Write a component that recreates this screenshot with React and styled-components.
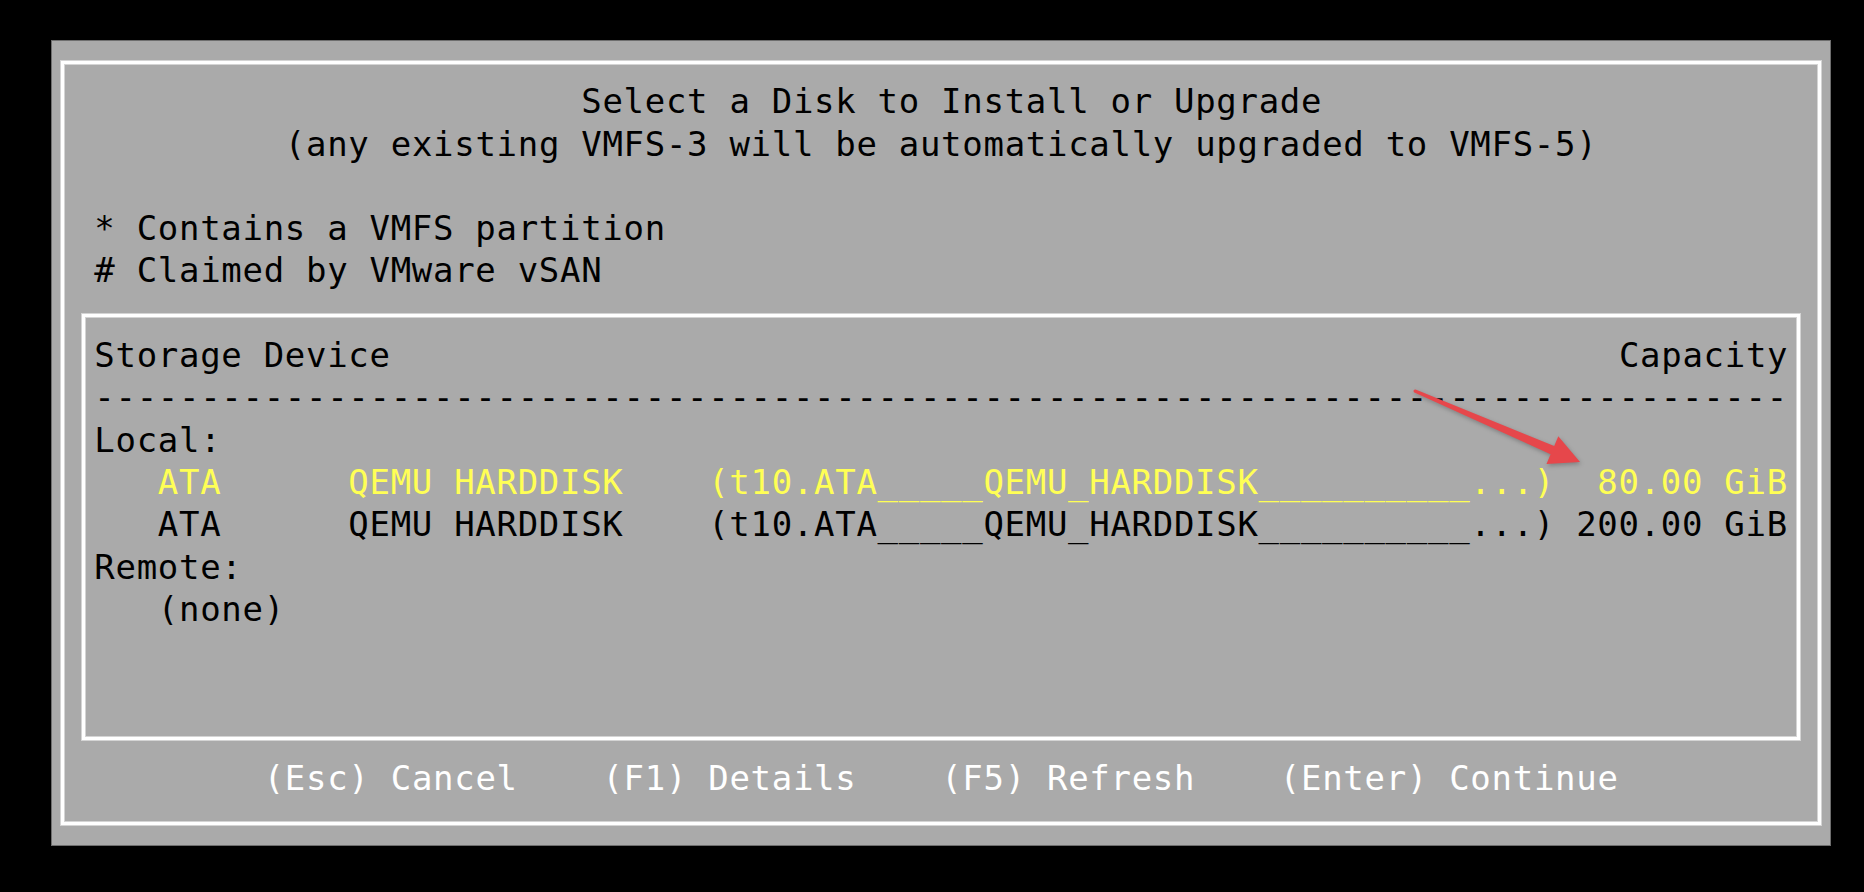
import React from 'react';
import styled, { createGlobalStyle } from 'styled-components';

// one text cell of the console: 84 x 19 cells on the grey panel
const CW = 21.17;
const RH = 42.3;
const cols = n => `${(n * CW).toFixed(2)}px`;

const GlobalStyle = createGlobalStyle`
  html, body {
    margin: 0;
    padding: 0;
    background: #000;
  }
  body {
    font-family: "DejaVu Sans Mono", "Liberation Mono", monospace;
  }
`;

const Screen = styled.div`
  min-height: 100vh;
  box-sizing: border-box;
  padding: 40px 0 0 51px;
  background: #000;
`;

const Panel = styled.div`
  position: relative;
  box-sizing: border-box;
  width: ${84 * CW + 2}px;
  height: ${19 * RH + 2}px;
  padding: 20px 9px;
  background: #aaaaaa;
  border: 1px solid #6e6e6e;
`;

const Frame = styled.div`
  box-sizing: border-box;
  height: 100%;
  display: flex;
  flex-direction: column;
  padding: 19.3px 18px 0;
  border: 3px solid #fff;
  box-shadow: 0 0 0 1px #d4d4d4, inset 0 0 0 1px #d4d4d4;
`;

const Line = styled.div`
  height: ${RH}px;
  line-height: 36.3px;
  font-size: 34px;
  letter-spacing: 0.7px;
  white-space: pre;
  color: ${p => p.$color || '#000'};
`;

const Title = styled(Line)`
  text-align: center;
  padding-left: ${p => (p.$shift ? cols(1) : 0)};
`;

const Legend = styled.div`
  margin-top: ${RH}px;
  padding-left: 12.3px;
`;

const DeviceBox = styled.div`
  margin-top: 19.7px;
  padding: 19.6px 9px 19.7px 9.3px;
  height: ${9 * RH}px;
  border: 3px solid #fff;
  box-shadow: 0 0 0 1px #d4d4d4, inset 0 0 0 1px #d4d4d4;
`;

const HeaderRow = styled(Line)`
  display: flex;
  justify-content: space-between;
`;

const DiskRow = styled(Line)`
  display: grid;
  grid-template-columns: ${cols(3)} ${cols(9)} ${cols(17)} ${cols(40)} ${cols(11)};
`;

const Capacity = styled.span`
  text-align: right;
`;

const Indented = styled(Line)`
  padding-left: ${cols(3)};
`;

const Footer = styled(Line)`
  margin-top: 19.6px;
  display: flex;
  justify-content: center;
  gap: ${cols(4)};
  color: #fff;
`;

const Arrow = styled.svg`
  position: absolute;
  left: 1348px;
  top: 334px;
  width: 200px;
  height: 100px;
  overflow: visible;
  filter: drop-shadow(1px 2px 2px rgba(0, 0, 0, 0.25));
`;

const disks = [
  {
    vendor: 'ATA',
    model: 'QEMU HARDDISK',
    path: '(t10.ATA_____QEMU_HARDDISK__________...)',
    capacity: '80.00 GiB',
    selected: true,
  },
  {
    vendor: 'ATA',
    model: 'QEMU HARDDISK',
    path: '(t10.ATA_____QEMU_HARDDISK__________...)',
    capacity: '200.00 GiB',
    selected: false,
  },
];

const keys = ['(Esc) Cancel', '(F1) Details', '(F5) Refresh', '(Enter) Continue'];

const App = () => {
  return (
    <Screen>
      <GlobalStyle />
      <Panel>
        <Frame>
          <Title $shift>Select a Disk to Install or Upgrade</Title>
          <Title>(any existing VMFS-3 will be automatically upgraded to VMFS-5)</Title>

          <Legend>
            <Line>* Contains a VMFS partition</Line>
            <Line># Claimed by VMware vSAN</Line>
          </Legend>

          <DeviceBox>
            <HeaderRow>
              <span>Storage Device</span>
              <span>Capacity</span>
            </HeaderRow>
            <Line>{'-'.repeat(80)}</Line>
            <Line>Local:</Line>
            {disks.map((d, i) => (
              <DiskRow key={i} $color={d.selected ? '#ffff55' : '#000'}>
                <span />
                <span>{d.vendor}</span>
                <span>{d.model}</span>
                <span>{d.path}</span>
                <Capacity>{d.capacity}</Capacity>
              </DiskRow>
            ))}
            <Line>Remote:</Line>
            <Indented>(none)</Indented>
          </DeviceBox>

          <Footer>
            {keys.map(k => (
              <span key={k}>{k}</span>
            ))}
          </Footer>
        </Frame>

        <Arrow viewBox="0 0 200 100">
          <circle cx="15" cy="16" r="1.5" fill="#e6474b" />
          <polygon
            fill="#e6474b"
            points="15.6,14.6 154.2,71 158.3,61.3 180,87 146.5,88.9 150.6,79.2 14.4,17.4"
          />
        </Arrow>
      </Panel>
    </Screen>
  );
};

export default App;
